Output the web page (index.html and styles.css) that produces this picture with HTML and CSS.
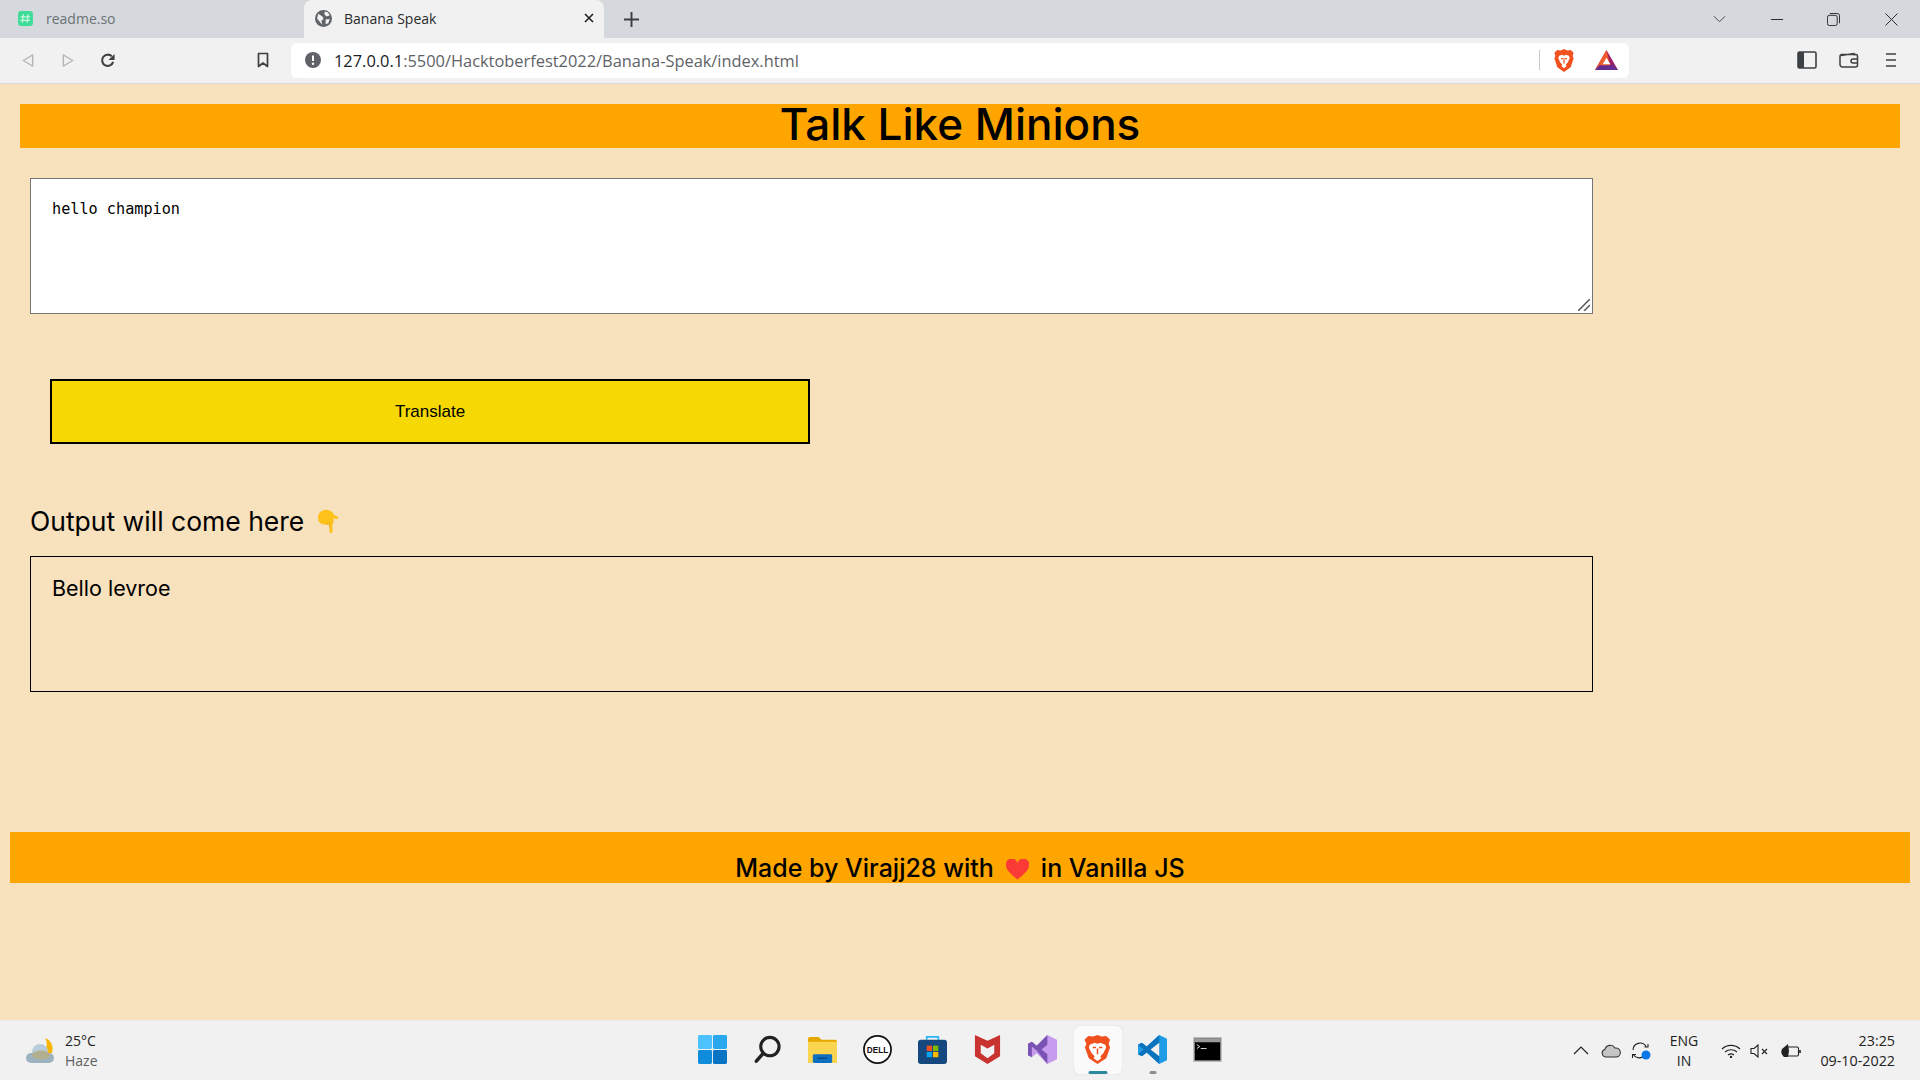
FILE: index.html
```html
<!DOCTYPE html>
<html lang="en">
<head>
<meta charset="utf-8">
<title>Banana Speak</title>
<link rel="stylesheet" href="styles.css">
</head>
<body>
<div class="tabstrip">
  <div class="tab tab-idle">
    <svg class="fav" viewBox="0 0 16 16"><rect x="1" y="1" width="14" height="14" rx="3" fill="#3ddc97"/><path d="M6 4 5 12M10.500 4l-1 8M3.500 6.500h9M3.200 9.800h9" stroke="#c9f5e0" stroke-width="1.200" fill="none"/></svg>
    <span class="tab-title tab-title-idle">readme.so</span>
  </div>
  <div class="tab tab-active">
    <svg class="fav" viewBox="0 0 16 16"><circle cx="8" cy="8" r="8" fill="#5f6368"/><path d="M3 3.500 7 6l1 2.500-2 1.500 1 4-3-3.500-2-2.500zM9 1.500l3 .5 2 3-3 1-2-1.500zM10 9l4-.5-1.500 4-2.500 1z" fill="#f1f1f1"/></svg>
    <span class="tab-title">Banana Speak</span>
    <svg class="tab-x" viewBox="0 0 10 10"><path d="M1 1l8 8M9 1 1 9" stroke="#202124" stroke-width="1.600"/></svg>
  </div>
  <svg class="plus" viewBox="0 0 14 14"><path d="M7 0v14M0 7h14" stroke="#3c4043" stroke-width="1.800"/></svg>
  <div class="win-controls">
    <svg class="win-ico chev" viewBox="0 0 14 8"><path d="M1 1l6 6 6-6" stroke="#444" fill="none"/></svg>
    <svg class="win-ico min" viewBox="0 0 14 14"><path d="M0 7h13" stroke="#222" stroke-width="1"/></svg>
    <svg class="win-ico res" viewBox="0 0 14 14"><rect x=".5" y="2.500" width="10.500" height="11" rx="2" fill="none" stroke="#222"/><path d="M3 .5h8a2.500 2.500 0 0 1 2.500 2.500v8" fill="none" stroke="#222"/></svg>
    <svg class="win-ico cls" viewBox="0 0 14 14"><path d="M.5.5l13 13M13.500.5l-13 13" stroke="#222"/></svg>
  </div>
</div>
<div class="toolbar">
  <svg class="nav back" viewBox="0 0 14 16"><path d="M12 2 2 8l10 6z" fill="none" stroke="#b4b7ba" stroke-width="1.500" stroke-linejoin="round"/></svg>
  <svg class="nav fwd" viewBox="0 0 14 16"><path d="M2 2l10 6-10 6z" fill="none" stroke="#b4b7ba" stroke-width="1.500" stroke-linejoin="round"/></svg>
  <svg class="nav reload" viewBox="0 0 16 16"><path d="M13.500 9.500A6 6 0 1 1 12 3.500" fill="none" stroke="#3c4043" stroke-width="2.200"/><path d="M15 1v6.500H8.500z" fill="#3c4043"/></svg>
  <svg class="nav bookmark" viewBox="0 0 12 16"><path d="M1.500 1.500h9v13L6 11l-4.500 3.500z" fill="none" stroke="#3c4043" stroke-width="1.700" stroke-linejoin="round"/></svg>
  <div class="omnibox">
    <svg class="info" viewBox="0 0 16 16"><circle cx="8" cy="8" r="8" fill="#5f6368"/><path d="M8 3.500v5.500" stroke="#fff" stroke-width="2"/><circle cx="8" cy="11.800" r="1.200" fill="#fff"/></svg>
    <span class="url"><span class="url-host">127.0.0.1</span>:5500/Hacktoberfest2022/Banana-Speak/index.html</span>
    <span class="omni-sep"></span>
    <svg class="shield" viewBox="0 0 20 24"><path d="M10 0l3.500 1.500L17 1l3 3-1 3 1 3-3 9-7 5-7-5-3-9 1-3-1-3 3-3 3.500.5z" fill="#f1501f"/><path d="M5 7l3-1 2 1 2-1 3 1 1 2-2 5-2 2 .5 2-2.500 2-2.500-2 .5-2-2-2-2-5z" fill="#fff"/><path d="M7 10h2.500M10.500 10H13M10 11v4" stroke="#f1501f" stroke-width="1.300" fill="none"/></svg>
    <svg class="bat" viewBox="0 0 24 22"><path d="M12 0 24 21H0z" fill="#9e1f63"/><path d="M12 0 17 21H0z" fill="#f15a29"/><path d="M0 21l4.500-5h15l4.500 5z" fill="#662d91"/><path d="M12 8l4 7H8z" fill="#fff"/></svg>
  </div>
  <svg class="tool side" viewBox="0 0 20 18"><rect x="1" y="1" width="18" height="16" rx="1.500" fill="none" stroke="#3c4043" stroke-width="1.600"/><rect x="1" y="1" width="6" height="16" fill="#3c4043"/></svg>
  <svg class="tool wallet" viewBox="0 0 20 16"><path d="M2 3.500 15 1.500l1 2M1 4a1.500 1.500 0 0 1 1.500-1.500H17A1.500 1.500 0 0 1 18.500 4v9a2 2 0 0 1-2 2h-13A2.500 2.500 0 0 1 1 12.500z" fill="none" stroke="#3c4043" stroke-width="1.500"/><path d="M19 7h-5a1.500 1.500 0 0 0 0 4h5" fill="none" stroke="#3c4043" stroke-width="1.500"/></svg>
  <svg class="tool menu" viewBox="0 0 12 16"><path d="M1 2h10M1 8h10M1 14h10" stroke="#3c4043" stroke-width="1.700"/></svg>
</div>

<main class="page">
  <h1 class="title">Talk Like Minions</h1>
  <div class="input-wrap">
    <textarea class="input" spellcheck="false">hello champion</textarea>
    <svg class="grip" viewBox="0 0 12 12"><path d="M0 12 12 0M6 12l6-6" stroke="#555" stroke-width="1.500"/></svg>
  </div>
  <button class="translate" type="button">Translate</button>
  <div class="out-label"><span>Output will come here</span>
    <svg class="hand" viewBox="0 0 22 24"><path d="M1 9C1 3 6 0 11 1c3 .5 5 2.500 6 5l3.500 1.500C22 8.300 21.500 10 20 10l-3.500-.5V14l-1 .5V23c0 1.300-3 1.300-3 0v-7.500H9C5 15.500 1 14 1 9z" fill="#fcc21b"/><path d="M12.500 15.500v3M9 15.500l3.500-1" stroke="#e59600" stroke-width=".6" fill="none"/></svg>
  </div>
  <div class="output">Bello levroe</div>
  <footer class="foot"><span>Made by Virajj28 with</span>
    <svg class="heart" viewBox="0 0 24 21"><path d="M12 21C5 15 0 11 0 6a6 6 0 0 1 12-2 6 6 0 0 1 12 2c0 5-5 9-12 15z" fill="#f93a35"/></svg>
    <span>in Vanilla JS</span></footer>
</main>

<div class="taskbar">
  <div class="weather">
    <svg class="weather-ico" viewBox="0 0 32 28"><path d="M20 1c6 2 9 8 7 15h-8c3-5 4-10 1-15z" fill="#f7b500"/><circle cx="15" cy="15" r="8" fill="#b7cddb"/><rect x="1" y="16" width="28" height="10" rx="5" fill="#9db3bf"/><ellipse cx="16" cy="18" rx="9" ry="4.500" fill="#b3ae8f"/></svg>
    <div class="weather-txt"><span class="temp">25°C</span><span class="haze">Haze</span></div>
  </div>
  <div class="apps">
    <div class="app"><svg viewBox="0 0 30 30"><rect x="0" y="0" width="14.500" height="14.500" rx="1.500" fill="#4cc2ff"/><rect x="15.500" y="0" width="14.500" height="14.500" rx="1.500" fill="#2aa8ee"/><rect x="0" y="15.500" width="14.500" height="14.500" rx="1.500" fill="#0f8cdc"/><rect x="15.500" y="15.500" width="14.500" height="14.500" rx="1.500" fill="#0a74c4"/></svg></div>
    <div class="app"><svg viewBox="0 0 30 30"><circle cx="17.500" cy="12" r="9.500" fill="none" stroke="#222" stroke-width="3.200"/><path d="M10.500 19 3.500 27" stroke="#222" stroke-width="3.600" stroke-linecap="round"/></svg></div>
    <div class="app"><svg viewBox="0 0 30 30"><path d="M0 4a2 2 0 0 1 2-2h9l3 3h14a2 2 0 0 1 2 2v20a2 2 0 0 1-2 2H2a2 2 0 0 1-2-2z" fill="#e8a700"/><path d="M0 7h30v20a2 2 0 0 1-2 2H2a2 2 0 0 1-2-2z" fill="#fcd550"/><rect x="5" y="20" width="20" height="9" rx="1.500" fill="#0c6fc0"/><path d="M10 24h10" stroke="#083f75" stroke-width="1.200"/></svg></div>
    <div class="app"><svg viewBox="0 0 30 30"><circle cx="15" cy="15" r="14" fill="#fff" stroke="#111" stroke-width="1.800"/><text x="15" y="18.500" text-anchor="middle" class="dell">DELL</text></svg></div>
    <div class="app"><svg viewBox="0 0 30 30"><path d="M9 5V2h12v3" fill="none" stroke="#29b6f6" stroke-width="1.800"/><rect x="0" y="5" width="30" height="25" rx="3" fill="#14487e"/><rect x="9" y="11" width="5.500" height="5.500" fill="#f25022"/><rect x="15.500" y="11" width="5.500" height="5.500" fill="#7fba00"/><rect x="9" y="17.500" width="5.500" height="5.500" fill="#00a4ef"/><rect x="15.500" y="17.500" width="5.500" height="5.500" fill="#ffb900"/></svg></div>
    <div class="app"><svg viewBox="0 0 30 30"><path d="M2 0 15 6 28 0v22l-13 8-13-8z" fill="#c8322f"/><path d="M8 10l7 4 7-4v9l-7 5-7-5z" fill="#f1f1f1"/></svg></div>
    <div class="app"><svg viewBox="0 0 30 30"><path d="M20 0l10 5v20l-10 5-11-11-5 4-4-2V9l4-2 5 4z" fill="#c79bee"/><path d="M20 0 9 11 4 7 0 9v12l4 2V12l5 4 11 14V20l-6-5 6-5z" fill="#7a52b3"/></svg></div>
    <div class="app app-on"><svg viewBox="0 0 30 30"><path d="M15 0l4 1.500 5-.5 4 4-1.500 4 1.500 4-4 11-9 6-9-6-4-11 1.500-4L1.500 5l4-4 5 .5z" fill="#f1501f"/><path d="M7 10l5-2 3 1 3-1 5 2 1 3-3 6-3 3 1 2-4 3-4-3 1-2-3-3-3-6z" fill="#fff"/><path d="M10 13h3.500M16.500 13H20M15 14v6" stroke="#f1501f" stroke-width="1.600" fill="none"/></svg><span class="ind ind-on"></span></div>
    <div class="app"><svg viewBox="0 0 30 30"><path d="M22 0l8 4v22l-8 4-13-12-5 4-4-2V10l4-2 5 4z" fill="#1f9ce5"/><path d="M22 0v30L9 18l-5 4-4-2 6-5-6-5 4-2 5 4z" fill="#0b72bd"/><path d="M22 8 13 15l9 7z" fill="#f1f1f1"/></svg><span class="ind ind-run"></span></div>
    <div class="app"><svg viewBox="0 0 30 30"><rect x="1" y="3" width="28" height="24" fill="#000" stroke="#b5b5b5" stroke-width="1.500"/><rect x="1.500" y="3.500" width="27" height="4" fill="#9a9a9a"/><path d="M4 10l3 2-3 2M8 14h6" stroke="#ddd" fill="none"/></svg></div>
  </div>
  <div class="tray">
    <svg class="tray-ico t-chev" viewBox="0 0 16 9"><path d="M1 8l7-7 7 7" fill="none" stroke="#222" stroke-width="1.200"/></svg>
    <svg class="tray-ico t-cloud" viewBox="0 0 20 14"><path d="M5 13a4 4 0 0 1-1-7.800A5.500 5.500 0 0 1 14 4a4.500 4.500 0 0 1 1.500 9z" fill="#c5c5c5" stroke="#333" stroke-width="1.100"/></svg>
    <svg class="tray-ico t-sync" viewBox="0 0 20 20"><path d="M2 9a7 7 0 0 1 13-3.500M17 3v3h-3.500M13 15a7 7 0 0 1-10.500-1M1.500 17v-3.500H5" fill="none" stroke="#222" stroke-width="1.100"/><circle cx="15" cy="14" r="4.500" fill="#0a78e6"/></svg>
    <div class="lang"><span>ENG</span><span>IN</span></div>
    <svg class="tray-ico t-wifi" viewBox="0 0 20 14"><path d="M1 5a13 13 0 0 1 18 0M4 8a9 9 0 0 1 12 0M7 11a5 5 0 0 1 6 0" fill="none" stroke="#222" stroke-width="1.100"/><circle cx="10" cy="13" r="1.200" fill="#222"/></svg>
    <svg class="tray-ico t-vol" viewBox="0 0 20 14"><path d="M1 4.500h3L8 1v12L4 9.500H1z" fill="none" stroke="#222" stroke-width="1.100"/><path d="M12 5l5 5M17 5l-5 5" stroke="#222" stroke-width="1.100"/></svg>
    <svg class="tray-ico t-bat" viewBox="0 0 20 14"><path d="M6 3h10a1.500 1.500 0 0 1 1.500 1.500v6A1.500 1.500 0 0 1 16 12H7" fill="none" stroke="#222" stroke-width="1.100"/><path d="M19 6v3" stroke="#222" stroke-width="1.600"/><path d="M7 0 1 5c-1.500 3-.5 6 2 8h4l1-6z" fill="#222"/></svg>
    <div class="clock"><span>23:25</span><span>09-10-2022</span></div>
  </div>
</div>
</body>
</html>
```
FILE: styles.css
```css
* { box-sizing: border-box; }
html, body { margin: 0; padding: 0; }
body {
  width: 1920px;
  height: 1080px;
  overflow: hidden;
  display: flex;
  flex-direction: column;
  background: #f8e1bd;
  font-family: "Open Sans", "Noto Sans", sans-serif;
}

/* browser tabs */
.tabstrip {
  height: 38px;
  display: flex;
  align-items: center;
  background: #d5d9dd;
  flex: none;
}
.tab { height: 100%; display: flex; align-items: center; font-size: 14px; padding-bottom: 2px; }
.tab-idle { width: 304px; padding-left: 17px; }
.tab-active {
  width: 300px;
  padding: 0 10px 2px 11px;
  background: #f1f1f1;
  border-radius: 8px 8px 0 0;
}
.fav { width: 17px; height: 17px; flex: none; }
.tab-title { margin-left: 12px; color: #28292b; flex: 1; }
.tab-title-idle { color: #6d7175; }
.tab-x { width: 10px; height: 10px; flex: none; }
.plus { width: 15px; height: 15px; margin-left: 20px; flex: none; }
.win-controls { margin-left: auto; display: flex; align-items: center; padding-right: 22px; }
.win-ico { flex: none; }
.chev { width: 13px; height: 8px; margin-right: 45px; }
.min { width: 13px; height: 13px; margin-right: 43px; }
.res { width: 13px; height: 13px; margin-right: 45px; }
.cls { width: 13px; height: 13px; }

/* toolbar */
.toolbar {
  height: 46px;
  display: flex;
  align-items: center;
  background: #f1f1f1;
  border-bottom: 1px solid #dcdcdc;
  flex: none;
  padding-bottom: 1px;
}
.nav { flex: none; height: 15px; }
.back { width: 14px; margin-left: 21px; }
.fwd { width: 14px; margin-left: 26px; }
.reload { width: 16px; margin-left: 25px; }
.bookmark { width: 12px; margin-left: 141px; height: 16px; }
.omnibox {
  width: 1338px;
  height: 35px;
  margin-left: 22px;
  background: #fff;
  border-radius: 6px;
  display: flex;
  align-items: center;
  padding-left: 14px;
}
.info { width: 16px; height: 16px; flex: none; }
.url { margin-left: 13px; font-size: 16.400px; color: #5f6368; white-space: nowrap; width: 1205px; flex: none; }
.url-host { color: #202124; }
.omni-sep { width: 1px; height: 20px; background: #c9c9c9; flex: none; }
.shield { width: 20px; height: 23px; margin-left: 14px; flex: none; }
.bat { width: 23px; height: 21px; margin-left: 21px; flex: none; }
.tool { flex: none; }
.side { width: 20px; height: 18px; margin-left: 168px; }
.wallet { width: 20px; height: 16px; margin-left: 22px; }
.menu { width: 12px; height: 16px; margin-left: 26px; }

/* page */
.page { flex: 1; min-height: 0; padding-top: 20px; }
.title {
  margin: 0 20px;
  height: 44px;
  background: #ffa500;
  text-align: center;
  font: 500 44px/40px Inter, "Noto Sans", sans-serif;
  color: #000;
}
.input-wrap {
  position: relative;
  width: 1563px;
  height: 136px;
  margin: 30px 0 0 30px;
}
.input {
  display: block;
  width: 100%;
  height: 100%;
  padding: 20px 16px 20px 21px;
  border: 1px solid #767676;
  background: #fff;
  color: #000;
  font: 15.200px/20px "DejaVu Sans Mono", monospace;
  outline: none;
  resize: none;
}
.grip { position: absolute; right: 3px; bottom: 3px; width: 12px; height: 12px; }
.translate {
  display: block;
  width: 760px;
  height: 65px;
  margin: 65px 0 0 50px;
  border: 2px solid #000;
  background: #f6d805;
  color: #000;
  font: 17px "Liberation Sans", Arial, sans-serif;
}
.out-label {
  margin: 59px 0 0 30px;
  height: 36px;
  display: flex;
  align-items: center;
  gap: 13px;
  font: 400 26.500px/36px Inter, "Noto Sans", sans-serif;
  color: #000;
}
.hand { width: 22px; height: 24px; flex: none; }
.output {
  width: 1563px;
  height: 136px;
  margin: 17px 0 0 30px;
  padding: 16px 21px;
  border: 1px solid #000;
  font: 400 21.500px/30px Inter, "Noto Sans", sans-serif;
  color: #000;
}
.foot {
  margin: 140px 10px 0;
  height: 51px;
  background: #ffa500;
  display: flex;
  align-items: flex-end;
  justify-content: center;
  gap: 12px;
  font: 500 25px/30px Inter, "Noto Sans", sans-serif;
  color: #000;
  white-space: nowrap;
}
.heart { width: 23px; height: 21px; flex: none; margin-bottom: 3px; }

/* taskbar */
.taskbar {
  height: 60px;
  flex: none;
  display: grid;
  grid-template-columns: 1fr auto 1fr;
  align-items: center;
  background: #f1f1f1;
  border-top: 1px solid #ececec;
}
.weather { display: flex; align-items: center; padding-left: 25px; }
.weather-ico { width: 32px; height: 28px; flex: none; }
.weather-txt { display: flex; flex-direction: column; margin-left: 8px; font-size: 14px; line-height: 20px; }
.temp { color: #222; }
.haze { color: #5f5f5f; }
.apps { display: flex; gap: 7px; padding-bottom: 2px; }
.app { width: 48px; height: 48px; display: flex; align-items: center; justify-content: center; position: relative; border-radius: 5px; }
.app svg { width: 29px; height: 29px; }
.app-on { background: #fafafa; box-shadow: 0 0 1px rgba(0,0,0,.2); }
.ind { position: absolute; bottom: 0; left: 50%; height: 3px; border-radius: 2px; transform: translateX(-50%); }
.ind-on { width: 19px; background: #2b8a9e; }
.ind-run { width: 7px; background: #8c8c8c; }
.dell { font: 700 8.500px "Liberation Sans", sans-serif; fill: #111; }
.tray { display: flex; align-items: center; justify-content: flex-end; padding-right: 25px; }
.tray-ico { flex: none; }
.t-chev { width: 16px; height: 9px; }
.t-cloud { width: 20px; height: 14px; margin-left: 12px; }
.t-sync { width: 20px; height: 20px; margin-left: 10px; }
.lang { display: flex; flex-direction: column; align-items: center; margin-left: 18px; width: 30px; font-size: 14px; line-height: 20px; color: #222; }
.t-wifi { width: 20px; height: 14px; margin-left: 22px; }
.t-vol { width: 20px; height: 14px; margin-left: 9px; }
.t-bat { width: 20px; height: 14px; margin-left: 11px; }
.clock { display: flex; flex-direction: column; align-items: flex-end; margin-left: 17px; width: 77px; font-size: 14.300px; line-height: 20px; color: #222; }
```
